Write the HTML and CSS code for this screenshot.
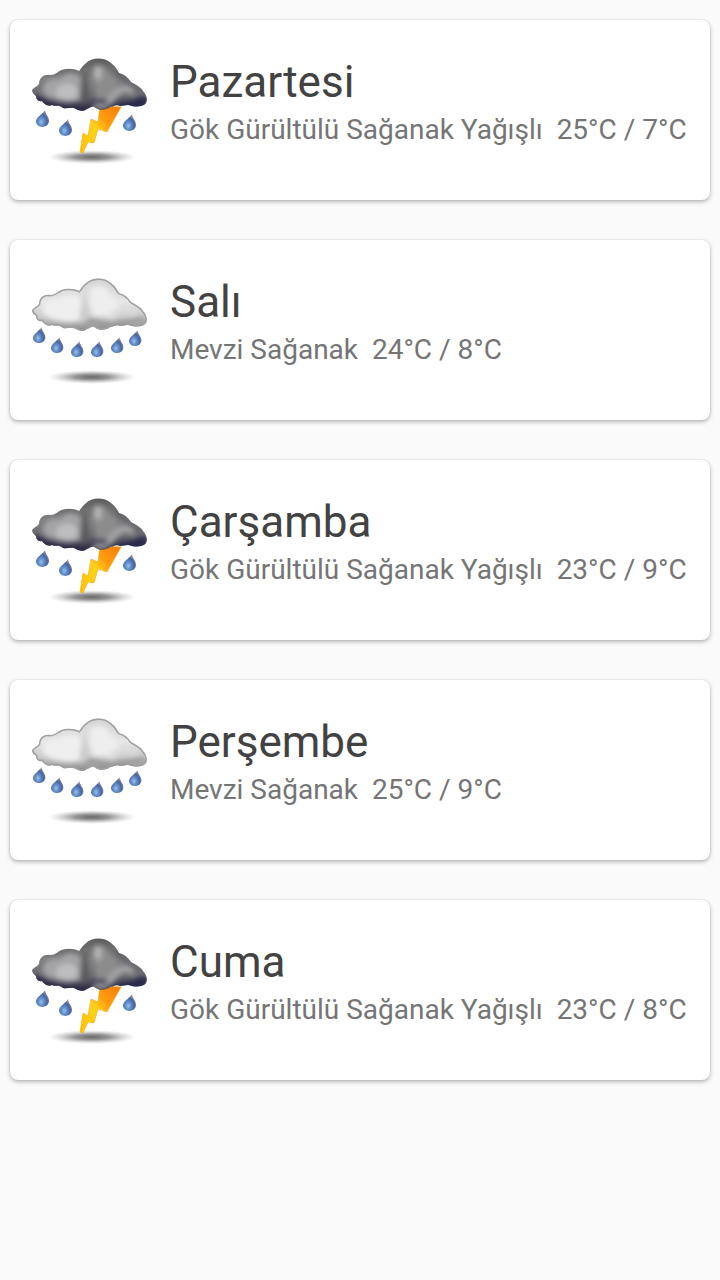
FILE: index.html
```html
<!DOCTYPE html>
<html lang="tr">
<head>
  <meta charset="UTF-8" />
  <meta name="viewport" content="width=device-width, initial-scale=1.0"/>
  <title>Hava Durumu</title>
  <link rel="stylesheet" href="styles.css">
</head>
<body>

  <!-- shared icon parts -->
  <svg class="defs" width="0" height="0" aria-hidden="true">
    <defs>
      <linearGradient id="lightFill" x1="0" y1="0" x2="0" y2="1">
        <stop offset="0" stop-color="#d2d2d2"/>
        <stop offset="0.45" stop-color="#e6e6e6"/>
        <stop offset="0.75" stop-color="#c8c8c8"/>
        <stop offset="1" stop-color="#888888"/>
      </linearGradient>
      <linearGradient id="darkFill" x1="0" y1="0" x2="0" y2="1">
        <stop offset="0" stop-color="#5c5c5c"/>
        <stop offset="0.4" stop-color="#808082"/>
        <stop offset="0.7" stop-color="#6c6c72"/>
        <stop offset="0.88" stop-color="#3c3b4e"/>
        <stop offset="1" stop-color="#2c2a44"/>
      </linearGradient>
      <linearGradient id="boltFill" x1="1" y1="0" x2="0" y2="1">
        <stop offset="0" stop-color="#f27a08"/>
        <stop offset="0.35" stop-color="#ff9d10"/>
        <stop offset="0.55" stop-color="#ffd31a"/>
        <stop offset="1" stop-color="#ffc000"/>
      </linearGradient>
      <radialGradient id="dropFill" cx="0.4" cy="0.7" r="0.7">
        <stop offset="0" stop-color="#9cc0ec"/>
        <stop offset="0.3" stop-color="#6590cc"/>
        <stop offset="0.65" stop-color="#46659f"/>
        <stop offset="1" stop-color="#a79aae"/>
      </radialGradient>
      <radialGradient id="groundFill">
        <stop offset="0" stop-color="#6a6a6a"/>
        <stop offset="0.4" stop-color="#858585" stop-opacity="0.85"/>
        <stop offset="1" stop-color="#bbbbbb" stop-opacity="0"/>
      </radialGradient>
      <filter id="soft" x="-20%" y="-20%" width="140%" height="140%">
        <feGaussianBlur stdDeviation="2.5"/>
      </filter>
      <filter id="edge" x="-10%" y="-10%" width="120%" height="120%">
        <feGaussianBlur stdDeviation="0.7"/>
      </filter>
      <path id="cloud" d="M2 40 C4 37 7 37 9 34 C9 27 15 24 20 25 C24 25 26 23 28 22 C33 18 43 18 49 21 C51 19 52 16 55 14 C62 7 74 7 81 13 C85 16 87 19 89 23 C94 24 98 27 101 32 C106 35 111 37 113 41 C116 44 118 49 116 53 C113 57 107 57 102 56 C97 54 94 56 90 56 C86 54 84 57 80 57 C77 60 69 61 66 58 C62 55 60 58 57 59 C54 62 49 61 46 59 C42 56 38 59 33 58 C29 54 26 57 22 55 C18 57 14 54 12 51 C8 52 6 49 6 46 C4 44 2 43 2 40 Z"/>
      <clipPath id="cloudClip"><use href="#cloud"/></clipPath>
      <path id="drop" d="M9 0 C9 4 14 8 13 12 C11 19 1 18 0 12 C0 7 6 5 9 0 Z" fill="url(#dropFill)"/>

      <symbol id="storm" viewBox="0 0 120 120">
        <ellipse cx="62" cy="107" rx="44" ry="7" fill="url(#groundFill)"/>
        <path d="M70 56 L91 57 L77 82 L68 79 L64 93 L58 92 L53 103 L50 102 L53 83 L58 86 L61 69 L68 72 Z" fill="url(#boltFill)" stroke="#f5a623" stroke-width="0.6" filter="url(#edge)"/>
        <g filter="url(#edge)">
          <use href="#cloud" fill="url(#darkFill)"/>
          <g clip-path="url(#cloudClip)">
            <g filter="url(#soft)">
              <path d="M12 40 C14 30 22 28 30 29 C36 22 46 22 50 28 L50 50 C38 54 24 50 16 46 Z" fill="#a4a4a7"/>
              <ellipse cx="37" cy="42" rx="11" ry="8" fill="#bdbdc0"/>
              <path d="M53 20 L57 26 L58 52 L51 54 Z" fill="#58585a"/>
              <path d="M62 18 C68 12 76 16 80 24 L90 36 L84 48 L66 48 Z" fill="#8c8c8d"/>
              <ellipse cx="68" cy="23" rx="4" ry="7" fill="#b4b4b4"/>
              <path d="M78 53 C86 42 94 34 104 42" stroke="#a2a2a4" stroke-width="7" fill="none"/>
              <path d="M86 22 L100 34 L110 42" stroke="#58585e" stroke-width="4" fill="none"/>
              <ellipse cx="71" cy="56" rx="9" ry="3" fill="#96969a"/>
              <path d="M4 46 L12 51 L24 56 L49 60" stroke="#2a2848" stroke-width="5" fill="none"/>
              <path d="M88 59 L104 55 L116 49" stroke="#28264a" stroke-width="7" fill="none"/>
            </g>
          </g>
        </g>
        <g filter="url(#edge)">
          <use href="#drop" x="6" y="60"/>
          <use href="#drop" x="29" y="69"/>
          <use href="#drop" x="93" y="64"/>
        </g>
      </symbol>

      <symbol id="shower" viewBox="0 0 120 120">
        <ellipse cx="62" cy="107" rx="44" ry="7" fill="url(#groundFill)"/>
        <g filter="url(#edge)">
          <use href="#cloud" fill="url(#lightFill)"/>
          <g clip-path="url(#cloudClip)">
            <use href="#cloud" fill="none" stroke="#a0a0a0" stroke-width="3" filter="url(#edge)"/>
            <g filter="url(#soft)">
              <path d="M12 41 C14 30 22 29 30 29 C36 23 46 24 50 28 L50 50 C38 54 24 50 16 46 Z" fill="#efefef"/>
              <path d="M53 24 L57 28 L58 52 L51 54 Z" fill="#cccccc"/>
              <path d="M60 20 C66 13 76 15 80 24 L90 34 L84 46 L62 46 Z" fill="#eeeeee"/>
              <path d="M80 49 C86 40 94 35 104 43" stroke="#dddddd" stroke-width="6" fill="none"/>
              <path d="M52 57 L62 50 L74 55 L94 53 L115 49" stroke="#949494" stroke-width="4" fill="none"/>
            </g>
          </g>
        </g>
        <g filter="url(#edge)">
          <use href="#drop" transform="translate(3 57) scale(0.95)"/>
          <use href="#drop" transform="translate(21 67) scale(0.95)"/>
          <use href="#drop" transform="translate(41 71) scale(0.95)"/>
          <use href="#drop" transform="translate(61 71) scale(0.95)"/>
          <use href="#drop" transform="translate(81 67) scale(0.95)"/>
          <use href="#drop" transform="translate(99 60) scale(0.95)"/>
        </g>
      </symbol>
    </defs>
  </svg>

  <main class="forecast">
    <article class="card">
      <svg class="icon" aria-hidden="true"><use href="#storm"/></svg>
      <div class="info">
        <h2 class="day">Pazartesi</h2>
        <p class="detail">Gök Gürültülü Sağanak Yağışlı&nbsp; 25°C / 7°C</p>
      </div>
    </article>

    <article class="card">
      <svg class="icon" aria-hidden="true"><use href="#shower"/></svg>
      <div class="info">
        <h2 class="day">Salı</h2>
        <p class="detail">Mevzi Sağanak&nbsp; 24°C / 8°C</p>
      </div>
    </article>

    <article class="card">
      <svg class="icon" aria-hidden="true"><use href="#storm"/></svg>
      <div class="info">
        <h2 class="day">Çarşamba</h2>
        <p class="detail">Gök Gürültülü Sağanak Yağışlı&nbsp; 23°C / 9°C</p>
      </div>
    </article>

    <article class="card">
      <svg class="icon" aria-hidden="true"><use href="#shower"/></svg>
      <div class="info">
        <h2 class="day">Perşembe</h2>
        <p class="detail">Mevzi Sağanak&nbsp; 25°C / 9°C</p>
      </div>
    </article>

    <article class="card">
      <svg class="icon" aria-hidden="true"><use href="#storm"/></svg>
      <div class="info">
        <h2 class="day">Cuma</h2>
        <p class="detail">Gök Gürültülü Sağanak Yağışlı&nbsp; 23°C / 8°C</p>
      </div>
    </article>
  </main>

</body>
</html>
```
FILE: styles.css
```css
* {
  margin: 0;
  padding: 0;
  box-sizing: border-box;
}

body {
  background: #fafafa;
  font-family: Roboto, sans-serif;
}

.defs {
  display: block;
}

.forecast {
  display: flex;
  flex-direction: column;
  gap: 40px;
  padding: 20px 10px;
}

.card {
  display: flex;
  align-items: flex-start;
  gap: 20px;
  padding: 30px 20px;
  background: #fff;
  border-radius: 8px;
  box-shadow: 0 2px 4px rgba(0, 0, 0, 0.26), 0 0 2px rgba(0, 0, 0, 0.14);
}

.icon {
  flex: none;
  width: 120px;
  height: 120px;
}

.info {
  flex: 1;
  min-width: 0;
  padding-top: 6px;
}

.day {
  font-size: 44px;
  line-height: 52px;
  font-weight: 400;
  color: #424242;
}

.detail {
  margin-top: 4px;
  font-size: 28px;
  line-height: 36px;
  color: #757575;
}
```
